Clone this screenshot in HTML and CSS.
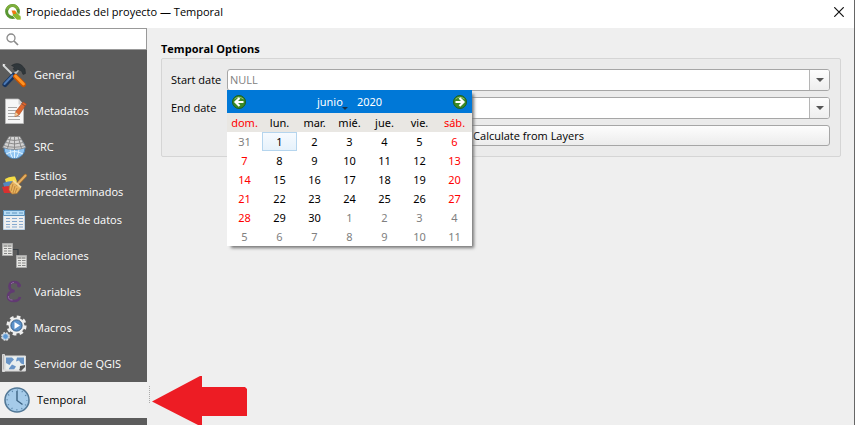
FILE: index.html
```html
<!DOCTYPE html>
<html lang="es">
<head>
<meta charset="utf-8">
<title>Propiedades del proyecto — Temporal</title>
<link rel="stylesheet" href="styles.css">
</head>
<body>
<div class="window">
  <header class="titlebar">
    <svg class="logo" viewBox="0 0 16 16" aria-hidden="true">
      <circle cx="7.5" cy="7.5" r="5.9" fill="none" stroke="#589632" stroke-width="3"/>
      <path d="M2 5.500a5.900 5.900 0 0 1 11-.5" fill="none" stroke="#7fae3c" stroke-width="2.400"/>
      <path d="M7.500 7.500h3.500l5 5v3.500h-4l-4.500-4.500z" fill="#8bb832" stroke="#fff" stroke-width=".6"/>
      <path d="M6.500 6.500h3.500l1 1v2.500h-3z" fill="#ee7913"/>
    </svg>
    <h1>Propiedades del proyecto — Temporal</h1>
    <button class="close" type="button" aria-label="Cerrar">
      <svg viewBox="0 0 10 10" aria-hidden="true"><path d="M.3 .3l9.400 9.400M9.700 .3l-9.400 9.400" stroke="#111" stroke-width="1.200"/></svg>
    </button>
  </header>

  <div class="body">
    <aside class="sidebar">
      <label class="search">
        <svg viewBox="0 0 13 13" aria-hidden="true"><circle cx="5" cy="5" r="4" fill="none" stroke="#8a8a8a" stroke-width="1.300"/><path d="M8 8l4 4" stroke="#8a8a8a" stroke-width="1.700"/></svg>
        <input type="search" aria-label="Buscar">
      </label>
      <nav>
        <a href="#general">
          <svg viewBox="0 0 26 26" aria-hidden="true">
            <path d="M2 3l11 11" stroke="#d5d8d8" stroke-width="1.800"/>
            <path d="M1.500 1.800l3 .8-1.800 2z" fill="#eee"/>
            <path d="M17 8L12 14" stroke="#bcc3c7" stroke-width="2.500"/>
            <path d="M10.500 3.500q5-3.500 10-.5l3.500 4 .5 4.500-2.500 1-1.500-3.500-3.500-1.500-2 2-3-2.800 1.500-1.700z" fill="#30373b" stroke="#20272a" stroke-width=".5"/>
            <path d="M12.500 13.500L4 22.500" stroke="#17345e" stroke-width="5" stroke-linecap="round"/>
            <path d="M11.500 13.500L3.500 22" stroke="#4a78b5" stroke-width="2" stroke-linecap="round"/>
            <path d="M14.500 14.500L22.500 22.500" stroke="#c85400" stroke-width="5" stroke-linecap="round"/>
            <path d="M14.500 14L22.500 22" stroke="#ff9424" stroke-width="2.800" stroke-linecap="round"/>
          </svg>General</a>
        <a href="#metadatos">
          <svg viewBox="0 0 26 26" aria-hidden="true">
            <path d="M4.500 1h13l5 5.500v19h-18z" fill="#f7f7f7" stroke="#bbb" stroke-width=".8"/>
            <path d="M17.500 1v5.500h5z" fill="#d2d2d2"/>
            <path d="M7 9.500h9M7 12.500h9M7 15.500h7M7 18.500h12M7 21.500h12" stroke="#aaa"/>
            <path d="M22 4l3.500 2-7.500 11-4 1.500 .5-4.500z" fill="#dd6830" stroke="#a74820" stroke-width=".6"/>
            <path d="M14.500 14l3 2.500-3.500 2z" fill="#ecd2a1"/><path d="M20.500 5.500l3.500 2.500" stroke="#8a5038"/>
          </svg>Metadatos</a>
        <a href="#src">
          <svg viewBox="0 0 26 26" aria-hidden="true">
            <circle cx="13.500" cy="14" r="10.500" fill="#8fc4f2" stroke="#4c84b8"/>
            <path d="M5 20q8.500-5 17 0M13.500 13v11M9 14q0 6 2.500 10M18 14q0 6-2.500 10" fill="none" stroke="#e0f3ff"/>
            <path d="M8 2.500h11l6 11q-11.500 4-23.500 0z" fill="#d4d4d4" stroke="#777" stroke-width=".7"/>
            <path d="M6.500 5.500q7 2 14 0M4.500 8.500q9 3 18 0M3 11.500q10.500 3.500 21 0M10 2.500l-3.500 12M13.500 2.500v13M17 2.500l3.500 12" fill="none" stroke="#848484" stroke-width=".9"/>
          </svg>SRC</a>
        <a class="tall" href="#estilos">
          <svg viewBox="0 0 26 26" aria-hidden="true">
            <path d="M4 8q4-3 10-2.500l2 5-10 5z" fill="#f5dd45"/>
            <path d="M2 12q5-2 10-2l2 5-10 4z" fill="#5488be"/>
            <path d="M1 16q4-1 8-1l4 7-10 0z" fill="#d93030"/>
            <path d="M12 10l8 7-4 5.500-5 .5-3-4 .5-4.500z" fill="#e7b35f" stroke="#aa722f" stroke-width=".7"/>
            <path d="M12 13l-2 7M14 15l-2 7M16 17l-2 5" stroke="#b87c34" stroke-width=".8"/>
            <path d="M16.500 13l8-8.500" stroke="#9c692b" stroke-width="3.400" stroke-linecap="round"/>
            <path d="M16.500 13l8-8.500" stroke="#e4ae61" stroke-width="2" stroke-linecap="round"/>
            <path d="M12 9.500l8 7" stroke="#f7d998" stroke-width="2"/>
          </svg><span>Estilos<br>predeterminados</span></a>
        <a href="#fuentes">
          <svg viewBox="0 0 26 26" aria-hidden="true">
            <path d="M2.500 3.500h21v19h-21z" fill="#efefef" stroke="#b9cfe3"/>
            <path d="M2.500 3.500h21v5h-21z" fill="#b7dcf5" stroke="#5b91bb"/>
            <path d="M5 6h4M11 6h5M18 6h4" stroke="#6195be"/>
            <path d="M5 11.500h4M11 11.500h5M18 11.500h4M5 14.500h4M11 14.500h5M18 14.500h4M5 17.500h4M11 17.500h5M18 17.500h4M5 20h4M11 20h5M18 20h4" stroke="#86a9cf"/>
          </svg>Fuentes de datos</a>
        <a href="#relaciones">
          <svg viewBox="0 0 26 26" aria-hidden="true">
            <path d="M12 6.500h5v6" fill="none" stroke="#343c43" stroke-width="1.200"/>
            <g id="table-glyph">
              <path d="M1.500 .5h10v12h-10z" fill="#e6e6e3" stroke="#aaa"/>
              <path d="M2 1h9v3h-9z" fill="#c2c2bf"/>
              <path d="M3 5.500h3M7 5.500h3.500M3 8h3M7 8h3.500M3 10.500h3M7 10.500h3.500M3 3h3M7 3h3" stroke="#858585"/>
            </g>
            <use href="#table-glyph" x="14" y="12"/>
          </svg>Relaciones</a>
        <a href="#variables">
          <svg viewBox="0 0 26 26" aria-hidden="true">
            <path d="M18.500 7q-1-4-5-4-5 0-5 4.500 0 4 5 4.500-6.500 .5-6.500 5.500 0 4.500 6 4.500 5 0 6-4" fill="none" stroke="#613a72" stroke-width="2.600"/>
            <circle cx="18" cy="6.500" r="1.900" fill="#613a72"/>
            <path d="M10 5q1-1.500 3-1.500M7.500 17q-.5 4 4 4" fill="none" stroke="#9b76aa" stroke-width=".8"/>
          </svg>Variables</a>
        <a href="#macros">
          <svg viewBox="0 0 26 26" aria-hidden="true">
            <circle cx="15.500" cy="10.500" r="8.800" fill="none" stroke="#eee" stroke-width="2.600" stroke-dasharray="3.700 3.210"/>
            <circle cx="15.500" cy="10.500" r="8" fill="#eee"/>
            <circle cx="15.500" cy="10.500" r="5.600" fill="#5b92cb" stroke="#355f88"/>
            <path d="M13.500 7l5.500 3.500-5.500 3.500z" fill="#fff"/>
            <circle cx="4.500" cy="21.500" r="3.600" fill="#5d98d3" stroke="#ddd" stroke-width="1.600" stroke-dasharray="2 .83"/>
            <circle cx="4.500" cy="21.500" r="2.800" fill="#5d98d3" stroke="#d8e2eb" stroke-width=".7"/>
          </svg>Macros</a>
        <a href="#servidor">
          <svg viewBox="0 0 26 26" aria-hidden="true">
            <path d="M1.500 3.500h2v17h-2z" fill="#bbb" stroke="#eee" stroke-width=".8"/>
            <path d="M4 5h20.500v14.500H4z" fill="#e9efef" stroke="#d8d8d8"/>
            <path d="M5 6.500h6l2 2-2.500 2.500-2 3-3.500-2zM16 6.500h7v7l-3-1-2-3-3 1zM8 17.500l3-4 4 2-2 3H8z" fill="#6995c7"/>
            <path d="M1.500 19.500h23" stroke="#ddd" stroke-width="2"/>
            <path d="M18 19q1-1 1-4l5-1v2l-4 4z" fill="#555"/>
          </svg>Servidor de QGIS</a>
        <a class="current" href="#temporal" aria-current="page">
          <svg viewBox="0 0 26 26" aria-hidden="true">
            <circle cx="13" cy="13" r="12" fill="#a5cbe9" stroke="#527896" stroke-width="1.600"/>
            <circle cx="13" cy="13" r="9.800" fill="none" stroke="#5985aa" stroke-width="1.500" stroke-dasharray="1 4.131" stroke-dashoffset=".5"/>
            <path d="M13 4v9.500l5.500 4" fill="none" stroke="#3c6382" stroke-width="1.400"/>
          </svg>Temporal</a>
      </nav>
      <span class="grip"></span>
      <svg class="pointer" viewBox="0 0 96 50" aria-hidden="true"><path d="M0 25.500L48 0h2v11h43l2 2v27H50v10h-2z" fill="#ed1c24"/></svg>
    </aside>

    <main>
      <h2 id="options">Temporal Options</h2>
      <form class="group" aria-labelledby="options">
        <label for="start">Start date</label>
        <div class="datefield">
          <input id="start" type="text" placeholder="NULL">
          <button type="button" aria-label="Abrir calendario"><svg viewBox="0 0 8 4" aria-hidden="true"><path d="M0 0h8l-4 4z" fill="#555"/></svg></button>
          <section class="calendar" aria-label="Calendario">
            <div class="month">
              <button type="button" aria-label="Mes anterior"><svg viewBox="0 0 14 14" aria-hidden="true"><circle cx="7" cy="7" r="6.500" fill="#3c8a26" stroke="#1f5f1d"/><path d="M2.500 4q4-3.500 9 0" fill="none" stroke="#91bd70"/><path d="M11.500 7H4M7.500 3L3.500 7l4 4" fill="none" stroke="#fff" stroke-width="2.200"/></svg></button>
              <div class="when"><button class="pick" type="button">junio</button><button type="button">2020</button></div>
              <button type="button" aria-label="Mes siguiente"><svg viewBox="0 0 14 14" aria-hidden="true"><circle cx="7" cy="7" r="6.500" fill="#3c8a26" stroke="#1f5f1d"/><path d="M2.500 4q4-3.500 9 0" fill="none" stroke="#91bd70"/><path d="M2.500 7H10M6.500 3l4 4-4 4" fill="none" stroke="#fff" stroke-width="2.200"/></svg></button>
            </div>
            <table>
              <thead><tr><th>dom.</th><th>lun.</th><th>mar.</th><th>mié.</th><th>jue.</th><th>vie.</th><th>sáb.</th></tr></thead>
              <tbody>
                <tr><td class="other">31</td><td class="selected">1</td><td>2</td><td>3</td><td>4</td><td>5</td><td>6</td></tr>
                <tr><td>7</td><td>8</td><td>9</td><td>10</td><td>11</td><td>12</td><td>13</td></tr>
                <tr><td>14</td><td>15</td><td>16</td><td>17</td><td>18</td><td>19</td><td>20</td></tr>
                <tr><td>21</td><td>22</td><td>23</td><td>24</td><td>25</td><td>26</td><td>27</td></tr>
                <tr><td>28</td><td>29</td><td>30</td><td class="other">1</td><td class="other">2</td><td class="other">3</td><td class="other">4</td></tr>
                <tr><td class="other">5</td><td class="other">6</td><td class="other">7</td><td class="other">8</td><td class="other">9</td><td class="other">10</td><td class="other">11</td></tr>
              </tbody>
            </table>
          </section>
        </div>
        <label for="end">End date</label>
        <div class="datefield">
          <input id="end" type="text">
          <button type="button" aria-label="Abrir calendario"><svg viewBox="0 0 8 4" aria-hidden="true"><path d="M0 0h8l-4 4z" fill="#555"/></svg></button>
        </div>
        <button class="calculate" type="button">Calculate from Layers</button>
      </form>
    </main>
  </div>
</div>
</body>
</html>
```
FILE: styles.css
```css
* { box-sizing: border-box; }

body {
  margin: 0;
  background: #efefef;
  color: #000;
  font: 11px/16px "Open Sans", "Noto Sans", sans-serif;
}

button, input { font: inherit; color: inherit; }
button { padding: 0; border: 0; background: none; }
svg { display: block; flex: none; }

.window {
  display: flex;
  flex-direction: column;
  height: 100vh;
  overflow: hidden;
  border-right: 1px solid #666;
}

/* Title bar */
.titlebar {
  display: flex;
  flex: none;
  align-items: center;
  height: 28px;
  padding: 0 10px 4px 5px;
  background: #fff;
}
.logo { width: 16px; height: 16px; margin-right: 5px; }
h1 { flex: 1; margin: 0; font-size: 11px; line-height: 18px; font-weight: 400; }
.close svg { width: 10px; height: 10px; }

.body { display: flex; flex: 1; min-height: 0; }

/* Section list */
.sidebar {
  position: relative;
  flex: none;
  width: 147px;
  background: #5c5c5c;
}
.search {
  display: flex;
  align-items: center;
  gap: 4px;
  height: 22px;
  margin-bottom: 7px;
  padding-left: 6px;
  border: 1px solid #999;
  border-left: 0;
  background: #fff;
}
.search svg { width: 13px; height: 13px; }
.search input { width: 100%; min-width: 0; border: 0; background: none; outline: 0; }

nav a {
  display: flex;
  align-items: center;
  gap: 7px;
  height: 36px;
  padding-left: 1px;
  color: #fff;
  text-decoration: none;
}
nav svg { width: 26px; height: 26px; }
nav .tall { height: 37px; }
nav .current { padding-left: 4px; background: #f0f0f0; color: #000; }

.grip {
  position: absolute;
  top: 358px;
  left: 149px;
  height: 17px;
  border-left: 1px dotted #aaa;
}
.pointer {
  position: absolute;
  top: 348px;
  left: 152px;
  width: 96px;
  height: 50px;
}

/* Options */
main { flex: 1; min-width: 0; padding: 13px 13px 13px 14px; }
h2 { margin: 0 0 1px; font-size: 11px; line-height: 16px; }

.group {
  display: grid;
  grid-template-columns: 50px 1fr;
  gap: 6px;
  align-items: center;
  padding: 10px 10px 10px 9px;
  border: 1px solid #d5d5d5;
  border-radius: 2px;
  background: #ebebeb;
}
.group label { line-height: 18px; white-space: nowrap; }

.datefield {
  position: relative;
  display: flex;
  height: 22px;
  border: 1px solid #a6a6a6;
  border-radius: 3px;
  background: #fff;
}
.datefield > input {
  flex: 1;
  min-width: 0;
  padding: 0 2px;
  border: 0;
  background: none;
  outline: 0;
}
.datefield > input::placeholder { color: #808080; opacity: 1; }
.datefield > button {
  display: grid;
  place-items: center;
  width: 20px;
  border-left: 1px solid #b5b5b5;
  border-radius: 0 2px 2px 0;
  background: linear-gradient(#fdfdfd, #eee);
}
.datefield > button svg { width: 8px; height: 4px; }
.calculate {
  grid-column: 2;
  height: 21px;
  border: 1px solid #a6a6a6;
  border-radius: 3px;
  background: linear-gradient(#fdfdfd, #ececec);
}

/* Calendar popup */
.calendar {
  position: absolute;
  z-index: 1;
  top: 20px;
  left: -1px;
  width: 245px;
  background: #fff;
  box-shadow: 3px 3px 3px -1px #777;
  font: 11px/18px "Noto Sans", sans-serif;
}
.month {
  display: flex;
  align-items: center;
  justify-content: space-between;
  height: 23px;
  padding: 0 5px;
  background: #0078d7;
  color: #fff;
}
.month svg { width: 14px; height: 14px; }
.when { display: flex; gap: 14px; }
.pick { position: relative; }
.pick::after {
  content: "";
  position: absolute;
  right: -5px;
  bottom: 1px;
  border: 3px solid transparent;
  border-top-color: #17324e;
  border-bottom: 0;
}
table { width: 100%; border-collapse: collapse; table-layout: fixed; }
th, td { height: 19px; padding: 0; font-weight: 400; text-align: center; }
th { background: #e9e7e3; }
th:first-child, th:last-child, td:first-child, td:last-child { color: #f00; }
td.other { color: #808080; }
td.selected {
  background: linear-gradient(#f7fbff, #e5f1fb);
  box-shadow: inset 0 0 0 1px #b5d5ee;
}
```
